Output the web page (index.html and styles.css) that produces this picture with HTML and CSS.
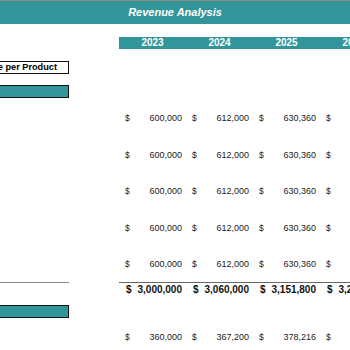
FILE: index.html
```html
<!DOCTYPE html>
<html>
<head>
<meta charset="utf-8">
<link rel="stylesheet" href="styles.css">
</head>
<body>
<div class="sheet">
  <div class="banner">Revenue Analysis</div>
  <div class="row years">
    <div class="lab"></div>
    <div class="yr">2023</div>
    <div class="yr">2024</div>
    <div class="yr">2025</div>
    <div class="yr">2026</div>
  </div>
  <div class="row r-title">
    <div class="lab"><div class="box white">Revenue per Product</div></div>
  </div>
  <div class="row r-teal1">
    <div class="lab"><div class="box teal"></div></div>
  </div>
  <div class="row data first">
    <div class="lab"></div>
    <div class="cell"><span>$</span><span>600,000</span></div>
    <div class="cell"><span>$</span><span>612,000</span></div>
    <div class="cell"><span>$</span><span>630,360</span></div>
    <div class="cell"><span>$</span><span>649,271</span></div>
  </div>
  <div class="row data">
    <div class="lab"></div>
    <div class="cell"><span>$</span><span>600,000</span></div>
    <div class="cell"><span>$</span><span>612,000</span></div>
    <div class="cell"><span>$</span><span>630,360</span></div>
    <div class="cell"><span>$</span><span>649,271</span></div>
  </div>
  <div class="row data">
    <div class="lab"></div>
    <div class="cell"><span>$</span><span>600,000</span></div>
    <div class="cell"><span>$</span><span>612,000</span></div>
    <div class="cell"><span>$</span><span>630,360</span></div>
    <div class="cell"><span>$</span><span>649,271</span></div>
  </div>
  <div class="row data">
    <div class="lab"></div>
    <div class="cell"><span>$</span><span>600,000</span></div>
    <div class="cell"><span>$</span><span>612,000</span></div>
    <div class="cell"><span>$</span><span>630,360</span></div>
    <div class="cell"><span>$</span><span>649,271</span></div>
  </div>
  <div class="row data">
    <div class="lab"></div>
    <div class="cell"><span>$</span><span>600,000</span></div>
    <div class="cell"><span>$</span><span>612,000</span></div>
    <div class="cell"><span>$</span><span>630,360</span></div>
    <div class="cell"><span>$</span><span>649,271</span></div>
  </div>
  <div class="row total">
    <div class="lab"><div class="rule"></div></div>
    <div class="cell tot"><span>$</span><span>3,000,000</span></div>
    <div class="cell tot"><span>$</span><span>3,060,000</span></div>
    <div class="cell tot"><span>$</span><span>3,151,800</span></div>
    <div class="cell tot"><span>$</span><span>3,246,354</span></div>
  </div>
  <div class="row r-teal2">
    <div class="lab"><div class="box teal"></div></div>
  </div>
  <div class="row data last">
    <div class="lab"></div>
    <div class="cell"><span>$</span><span>360,000</span></div>
    <div class="cell"><span>$</span><span>367,200</span></div>
    <div class="cell"><span>$</span><span>378,216</span></div>
    <div class="cell"><span>$</span><span>389,563</span></div>
  </div>
</div>
</body>
</html>
```
FILE: styles.css
```css
html, body {
  margin: 0;
  padding: 0;
  background: #fff;
}
body {
  width: 350px;
  height: 350px;
  overflow: hidden;
  font-family: "Liberation Sans", Arial, sans-serif;
  color: #1a1a1a;
}
.sheet {
  width: 350px;
  display: flex;
  flex-direction: column;
}
.banner {
  height: 23px;
  border-top: 1px solid #8a8a8a;
  background: #31959a;
  color: #fff;
  font-weight: bold;
  font-style: italic;
  font-size: 11px;
  line-height: 23px;
  text-align: center;
}
.row {
  display: grid;
  grid-template-columns: 119px repeat(4, 67px);
  width: 387px;
}
.lab {
  position: relative;
}
.years {
  margin-top: 13px;
  height: 12px;
}
.yr {
  background: #31959a;
  color: #fff;
  font-weight: bold;
  font-size: 10px;
  line-height: 12px;
  text-align: center;
}
.r-title {
  margin-top: 12px;
  height: 13px;
}
.box {
  width: 109px;
  margin-left: -40px;
  height: 13px;
  box-sizing: border-box;
  border: 1.5px solid #111;
}
.box.white {
  background: #fff;
  font-size: 9.2px;
  font-weight: bold;
  line-height: 10px;
  white-space: nowrap;
  text-align: right;
  padding-right: 11px;
  color: #000;
}
.box.teal {
  background: #31959a;
}
.r-teal1 {
  margin-top: 11px;
  height: 13px;
}
.data {
  height: 12px;
  margin-top: 24.6px;
  font-size: 9px;
  line-height: 12px;
  color: #222;
}
.data.first {
  margin-top: 14px;
}
.cell {
  display: flex;
  justify-content: space-between;
  padding: 0 4px 0 6px;
}
.cell span:first-child {
  font-size: 8.5px;
}
.total {
  margin-top: 12px;
  height: 13px;
  font-size: 10px;
  font-weight: bold;
  line-height: 13px;
  color: #111;
}
.total .rule {
  position: absolute;
  left: 0;
  top: 0;
  width: 69px;
  height: 1px;
  background: #888;
}
.cell.tot {
  border-top: 1px solid #666;
  padding: 0 4px 0 7px;
}
.cell.tot span:first-child {
  font-size: 10px;
}
.r-teal2 {
  margin-top: 10px;
  height: 13px;
}
.data.last {
  margin-top: 13px;
}
```
